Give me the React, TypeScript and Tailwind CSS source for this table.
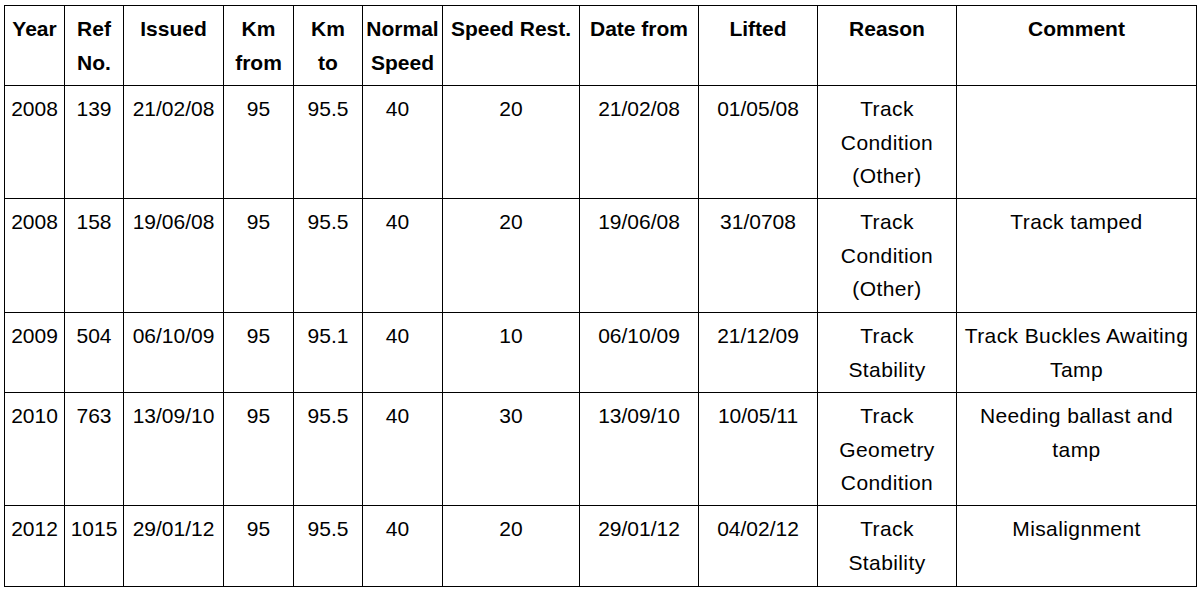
const cols = [60, 59, 100, 70, 69, 80, 137, 119, 119, 139, 240];

const headers: string[][] = [
  ["Year"],
  ["Ref", "No."],
  ["Issued"],
  ["Km", "from"],
  ["Km", "to"],
  ["Normal", "Speed"],
  ["Speed Rest."],
  ["Date from"],
  ["Lifted"],
  ["Reason"],
  ["Comment"],
];

type Row = { h: string; cells: string[][] };

const rows: Row[] = [
  {
    h: "h-[113px]",
    cells: [["2008"], ["139"], ["21/02/08"], ["95"], ["95.5"], ["40"], ["20"], ["21/02/08"], ["01/05/08"], ["Track", "Condition", "(Other)"], []],
  },
  {
    h: "h-[114px]",
    cells: [["2008"], ["158"], ["19/06/08"], ["95"], ["95.5"], ["40"], ["20"], ["19/06/08"], ["31/0708"], ["Track", "Condition", "(Other)"], ["Track tamped"]],
  },
  {
    h: "h-[80px]",
    cells: [["2009"], ["504"], ["06/10/09"], ["95"], ["95.1"], ["40"], ["10"], ["06/10/09"], ["21/12/09"], ["Track", "Stability"], ["Track Buckles Awaiting", "Tamp"]],
  },
  {
    h: "h-[113px]",
    cells: [["2010"], ["763"], ["13/09/10"], ["95"], ["95.5"], ["40"], ["30"], ["13/09/10"], ["10/05/11"], ["Track", "Geometry", "Condition"], ["Needing ballast and", "tamp"]],
  },
  {
    h: "h-[81px]",
    cells: [["2012"], ["1015"], ["29/01/12"], ["95"], ["95.5"], ["40"], ["20"], ["29/01/12"], ["04/02/12"], ["Track", "Stability"], ["Misalignment"]],
  },
];

function Lines({ lines }: { lines: string[] }) {
  return (
    <>
      {lines.map((l, i) => (
        <div key={i} className="whitespace-nowrap">
          {l}
        </div>
      ))}
    </>
  );
}

function cellClass(ci: number) {
  if (ci === 5) return "border border-black pl-0 pr-[10px] pt-[6px] align-top text-center";
  if (ci >= 9) return "border border-black px-0 pt-[6px] align-top text-center tracking-[0.4px]";
  return "border border-black px-0 pt-[6px] align-top text-center";
}

export default function App() {
  return (
    <div className="min-h-screen bg-white pl-[4px] pt-[5px] font-['Liberation_Sans',Arial,sans-serif] text-[21px] leading-[33.5px] text-black">
      <table className="table-fixed border-collapse border border-black" style={{ width: 1192 }}>
        <colgroup>
          {cols.map((w, i) => (
            <col key={i} style={{ width: w }} />
          ))}
        </colgroup>
        <thead>
          <tr className="h-[80px]">
            {headers.map((h, i) => (
              <th key={i} className="border border-black px-0 pt-[6px] align-top text-center font-bold">
                <Lines lines={h} />
              </th>
            ))}
          </tr>
        </thead>
        <tbody>
          {rows.map((r, ri) => (
            <tr key={ri} className={r.h}>
              {r.cells.map((c, ci) => (
                <td key={ci} className={cellClass(ci)}>
                  <Lines lines={c} />
                </td>
              ))}
            </tr>
          ))}
        </tbody>
      </table>
    </div>
  );
}
